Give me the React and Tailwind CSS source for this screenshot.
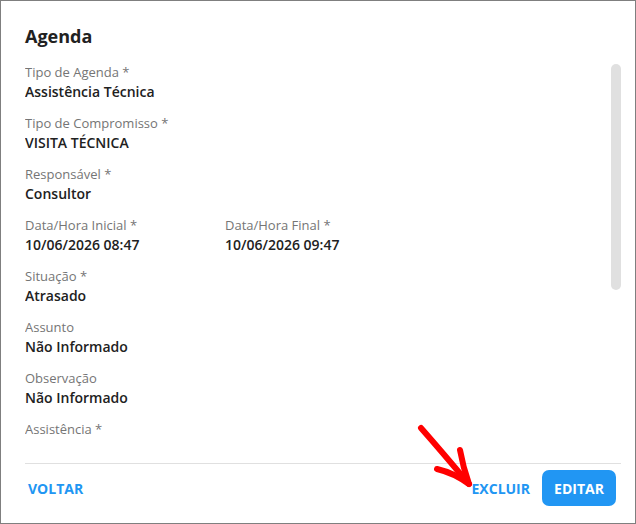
import React from 'react';

const fields = [
  { label: 'Tipo de Agenda *', value: 'Assistência Técnica' },
  { label: 'Tipo de Compromisso *', value: 'VISITA TÉCNICA' },
  { label: 'Responsável *', value: 'Consultor' },
  {
    pair: [
      { label: 'Data/Hora Inicial *', value: '10/06/2026 08:47' },
      { label: 'Data/Hora Final *', value: '10/06/2026 09:47' },
    ],
  },
  { label: 'Situação *', value: 'Atrasado' },
  { label: 'Assunto', value: 'Não Informado' },
  { label: 'Observação', value: 'Não Informado' },
  { label: 'Assistência *', value: '' },
];

function Field({ label, value }) {
  return (
    <div>
      <div className="text-[13px] leading-[19px] pt-px text-[#757575]">{label}</div>
      <div className="text-[14px] leading-[19px] font-semibold text-[#212121] min-h-[19px]">{value}</div>
    </div>
  );
}

export default function App() {
  return (
    <div
      className="relative w-[636px] h-[524px] bg-white border border-[#7f7f7f] flex flex-col overflow-hidden"
      style={{ fontFamily: '"Open Sans", "Noto Sans", sans-serif' }}
    >
      {/* Header */}
      <div className="pl-6 pr-[14px] pt-[23px]">
        <h1 className="text-[18px] leading-6 font-bold text-[#212121]">Agenda</h1>
      </div>

      {/* Body */}
      <div className="flex-1 min-h-0 flex pl-6 pr-[14px]">
        <div className="flex-1 min-h-0 overflow-hidden pt-[14px] flex flex-col gap-[12px]">
          {fields.map((f, i) =>
            f.pair ? (
              <div key={i} className="grid grid-cols-[200px_200px]">
                {f.pair.map((p) => (
                  <Field key={p.label} label={p.label} value={p.value} />
                ))}
              </div>
            ) : (
              <Field key={i} label={f.label} value={f.value} />
            )
          )}
        </div>
        <div className="w-[10px] pt-[16px]">
          <div className="h-[226px] rounded-[5px] bg-[#e0e0e0]" />
        </div>
      </div>

      {/* Divider */}
      <div className="pl-6 pr-[14px]">
        <div className="h-px bg-[#e0e0e0]" />
      </div>

      {/* Footer */}
      <div className="h-[59px] px-[19px] pt-[6px] flex items-start justify-between">
        <button className="h-9 px-2 text-[14px] font-bold text-[#2196f3]">VOLTAR</button>
        <div className="flex items-center gap-1">
          <button className="h-9 px-2 text-[14px] font-bold text-[#2196f3]">EXCLUIR</button>
          <button className="h-9 w-[74px] rounded-[7px] bg-[#2196f3] text-[14px] font-bold text-white">
            EDITAR
          </button>
        </div>
      </div>

      {/* Annotation arrow */}
      <svg
        className="absolute inset-0 pointer-events-none"
        width="636"
        height="524"
        viewBox="0 0 636 524"
        fill="none"
      >
        <g stroke="#ff0000" strokeWidth="6" strokeLinecap="round" strokeLinejoin="round">
          <path d="M420 427 Q442 452 467 482" />
          <path d="M459 449 Q462 466 468 483" />
          <path d="M436 468 Q453 472 468 483" />
        </g>
      </svg>
    </div>
  );
}
